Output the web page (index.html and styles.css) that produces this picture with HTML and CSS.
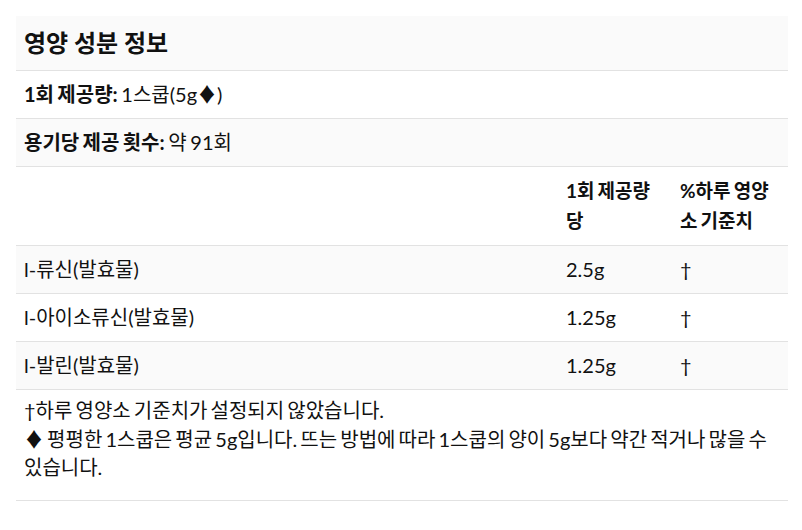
FILE: index.html
```html
<!DOCTYPE html>
<html lang="ko">
<head>
<meta charset="utf-8">
<link rel="stylesheet" href="styles.css">
</head>
<body>
<div class="facts">
  <table class="tbl">
    <thead>
      <tr class="title-row"><th colspan="3" class="title">영양 성분 정보</th></tr>
      <tr class="info"><td colspan="3"><b>1회 제공량:</b> 1스쿱(5g♦)</td></tr>
      <tr class="info alt"><td colspan="3"><b>용기당 제공 횟수:</b> 약 91회</td></tr>
      <tr class="head">
        <th class="name"></th>
        <th class="amt">1회 제공량 당</th>
        <th class="dv">%하루 영양소 기준치</th>
      </tr>
    </thead>
    <tbody>
      <tr class="alt"><td>l-류신(발효물)</td><td>2.5g</td><td>†</td></tr>
      <tr><td>l-아이소류신(발효물)</td><td>1.25g</td><td>†</td></tr>
      <tr class="alt"><td>l-발린(발효물)</td><td>1.25g</td><td>†</td></tr>
    </tbody>
    <tfoot>
      <tr class="foot"><td colspan="3">†하루 영양소 기준치가 설정되지 않았습니다.<br>♦ 평평한 1스쿱은 평균 5g입니다. 뜨는 방법에 따라 1스쿱의 양이 5g보다 약간 적거나 많을 수 있습니다.</td></tr>
    </tfoot>
  </table>
</div>
</body>
</html>
```
FILE: styles.css
```css
html, body {
  margin: 0;
  padding: 0;
  background: #fff;
}
body {
  font-family: Lato, "Noto Sans CJK KR", sans-serif;
  color: #111;
  font-size: 20px;
}
.facts {
  padding: 16px 14px 0 16px;
}
.tbl {
  width: 772px;
  border-collapse: collapse;
  word-spacing: -1.5px;
}
.tbl th, .tbl td {
  padding: 8px;
  line-height: 31px;
  text-align: left;
  vertical-align: top;
  border-bottom: 1px solid #e2e2e2;
  font-weight: 400;
}
.tbl th {
  font-weight: 700;
}
.tbl b {
  font-weight: 700;
}
.title-row .title {
  background: #fafafa;
  font-size: 24px;
  line-height: 38px;
  padding: 8px;
  word-spacing: 0;
}
.alt td {
  background: #fafafa;
}
.tbl .head th {
  font-size: 19px;
  line-height: 30px;
  padding: 9px 8px;
}
.head th.amt {
  width: 98px;
}
.head th.dv {
  width: 100px;
}
.tbl .foot td {
  background: #fff;
  word-spacing: -2px;
  line-height: 28.5px;
  padding: 6px 8px 18px;
}
```
